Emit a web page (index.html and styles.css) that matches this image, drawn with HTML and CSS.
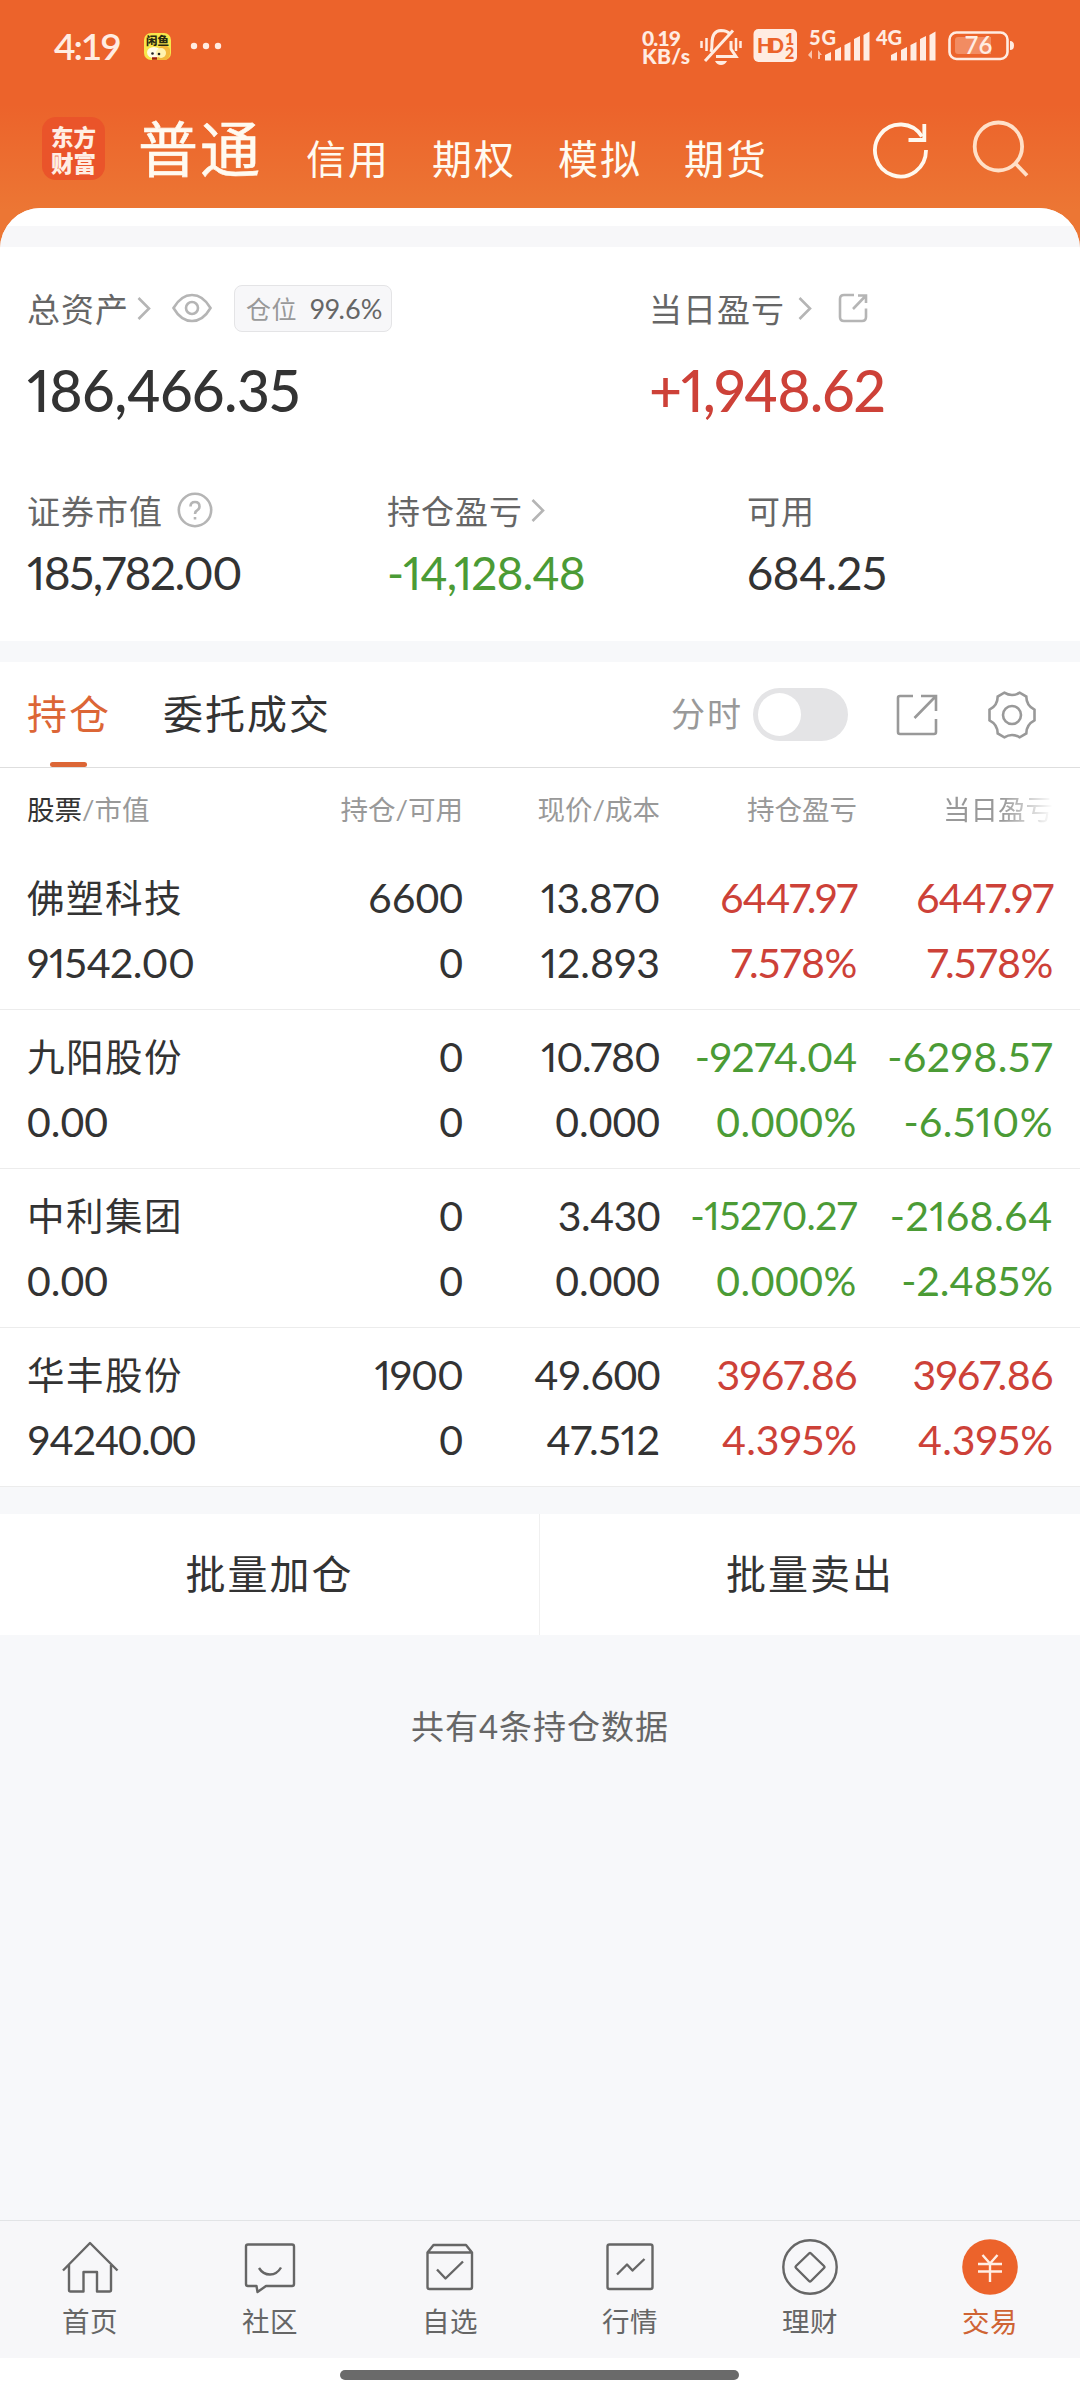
FILE: index.html
```html
<!DOCTYPE html>
<html lang="zh-CN">
<head>
<meta charset="utf-8">
<title>交易</title>
<link rel="stylesheet" href="styles.css">
</head>
<body>
<header class="top">
  <div class="status">
    <span class="clock">4:19</span>
    <svg class="app" width="27" height="27" viewBox="0 0 27 27"><rect width="27" height="27" rx="7" fill="#f8e64b"/><path d="M13 17Q20 8 26 16V21Q25 27 20 27H13Z" fill="#f3b93c"/><ellipse cx="10" cy="19.500" rx="7" ry="5.500" fill="#fffbe6"/><ellipse cx="17" cy="20" rx="5" ry="5" fill="#fff3b0"/><circle cx="8.500" cy="20.500" r="1.300" fill="#222"/><circle cx="15" cy="21" r="1.300" fill="#222"/><path d="M8 25.500h5" stroke="#a01c10" stroke-width="2.500"/><text x="13.500" y="11.500" text-anchor="middle" class="app-t">闲鱼</text></svg>
    <svg class="dots" width="32" height="8" viewBox="0 0 32 8" fill="#ffece2"><circle cx="4" cy="4" r="3.200"/><circle cx="16" cy="4" r="3.200"/><circle cx="28" cy="4" r="3.200"/></svg>
    <svg class="sys" width="380" height="44" viewBox="640 24 380 44" fill="#ffece2">
      <text x="642" y="46" class="net" textLength="39">0.19</text>
      <text x="642" y="63.500" class="net" textLength="48">KB/s</text>
      <g fill="none" stroke="#ffece2" stroke-width="3"><path d="M711 52Q712 49 712 43Q712 31 721 30.500Q727 30.500 730 34M716 56.500H736L731 49V41"/><path d="M705 61L733 30.500"/><path d="M701.500 41v7M706.500 38v13M736 38v13M740.500 41v7" stroke-width="2.500"/></g>
      <path d="M715 61H727Q725 65 721 65Q717 65 715 61Z"/>
      <rect x="753.500" y="29" width="43.500" height="33" rx="5"/>
      <g fill="#ec632b"><text x="757" y="52.500" class="hd" textLength="27">HD</text><text x="785" y="44.500" class="hn">1</text><text x="785" y="58.500" class="hn">2</text></g>
      <text x="809" y="44.500" class="gen" textLength="27">5G</text>
      <text x="876" y="44.500" class="gen" textLength="26">4G</text>
      <path d="M812 50v9l-4-4zM818 59v-9l4 5h-2v4z" opacity=".7"/>
      <path id="bars" d="M825 55l6-3v8.500h-6zM835 50l6-3v13.500h-6zM844.500 45l6-3v18.500h-6zM854 39l6-3v24.500h-6zM863.500 35l6-3.500v29h-6z"/>
      <use href="#bars" x="66"/>
      <rect x="949.500" y="32.500" width="58" height="26.500" rx="7" fill="none" stroke="#ffece2" stroke-width="2.600"/>
      <path d="M955 40q0-3 3-3H991V54H958q-3 0-3-3z" opacity=".3"/>
      <path d="M1010 41q4 0 4 4.500t-4 4.500z"/>
      <text x="978.500" y="54" text-anchor="middle" class="bat">76</text>
    </svg>
  </div>
  <nav class="head">
    <div class="logo"><span>东方</span><span>财富</span></div>
    <span class="main">普通</span>
    <span class="alt">信用</span><span class="alt">期权</span><span class="alt">模拟</span><span class="alt">期货</span>
    <svg class="refresh" width="60" height="60" viewBox="870 120 60 60" fill="none" stroke="#fff8ee" stroke-width="3.800"><path d="M926 150A25.500 26 0 1 1 922 136.500"/><path d="M924.300 124V140H908.500"/></svg>
    <svg class="search" width="60" height="60" viewBox="970 120 60 60" fill="none" stroke="#ffe0c8" stroke-width="3.800"><ellipse cx="998.400" cy="146.500" rx="23.700" ry="24"/><path d="M1015 163L1027 175.500"/></svg>
  </nav>
</header>
<main>
  <div class="lip"></div>
  <section class="assets">
    <div class="major">
      <div>
        <div class="lab"><span>总资产</span><svg class="chev" width="14" height="24" viewBox="0 0 14 24"><path d="M1.500 2L12 12.500L1.500 23"/></svg>
        <svg class="eye" width="40" height="30" viewBox="0 0 40 30"><path d="M1.500 15Q9 2 20 2T38.500 15Q31 28 20 28T1.500 15Z"/><circle cx="20" cy="15" r="6"/></svg>
        <span class="badge"><i>仓位</i><b class="n">99.6%</b></span></div>
        <div class="big"><span class="n k1">186,466.35</span></div>
      </div>
      <div>
        <div class="lab"><span>当日盈亏</span><svg class="chev c2" width="14" height="24" viewBox="0 0 14 24"><path d="M1.500 2L12 12.500L1.500 23"/></svg>
        <svg class="out" width="30" height="30" viewBox="0 0 30 30"><path d="M16 2H6Q2 2 2 6V24Q2 28 6 28H24Q28 28 28 24V15.500M15 16L27.500 3M20 2.500H28V10"/></svg></div>
        <div class="big red"><span class="n k2">+1,948.62</span></div>
      </div>
    </div>
    <div class="minor">
      <div><div class="lab"><span>证券市值</span><svg class="q" width="36" height="36" viewBox="0 0 36 36"><circle cx="18" cy="18" r="16.200"/><path d="M13.500 14.500Q13.500 10 18 10T22.500 14.500Q22.500 17 20 18.500Q18 19.500 18 22"/><path d="M18 25v2.500"/></svg></div><div class="mid"><span class="n k3">185,782.00</span></div></div>
      <div><div class="lab"><span>持仓盈亏</span><svg class="chev" width="14" height="24" viewBox="0 0 14 24"><path d="M1.500 2L12 12.500L1.500 23"/></svg></div><div class="mid green"><span class="n k2">-14,128.48</span></div></div>
      <div><div class="lab"><span>可用</span></div><div class="mid"><span class="n k1">684.25</span></div></div>
    </div>
  </section>
  <section class="tabs">
    <span class="tab on">持仓</span><span class="tab">委托成交</span>
    <span class="fs">分时</span><span class="toggle"></span>
    <svg class="share" width="44" height="44" viewBox="0 0 44 44"><path d="M18 3H5Q3 3 3 5V39Q3 41 5 41H39Q41 41 41 39V26M19.500 25L40 4M26 3H41V18"/></svg>
    <svg class="gear" width="52" height="52" viewBox="0 0 52 52"><path d="M18.300 3.700Q26 8.300 33.700 3.700L40.300 7.500Q40.300 16.500 48.500 20.700V31.300Q40.300 35.500 40.300 44.500L33.700 48.300Q26 43.700 18.300 48.300L11.700 44.500Q11.700 35.500 3.500 31.300V20.700Q11.700 16.500 11.700 7.500Z"/><circle cx="26" cy="26" r="9"/></svg>
  </section>
  <section class="table">
    <div class="th"><span><em>股票</em>/市值</span><span>持仓/可用</span><span>现价/成本</span><span>持仓盈亏</span><span class="fade">当日盈亏</span></div>
    <div class="row"><span class="name">佛塑科技</span><span class="n t">6600</span><span class="n k1">13.870</span><span class="n red k2">6447.97</span><span class="n red k2">6447.97</span>
      <span class="n k1">91542.00</span><span class="n t">0</span><span class="n">12.893</span><span class="n red k1">7.578%</span><span class="n red k1">7.578%</span></div>
    <div class="row"><span class="name">九阳股份</span><span class="n t">0</span><span class="n k2">10.780</span><span class="n green k1">-9274.04</span><span class="n green w1">-6298.57</span>
      <span class="n t">0.00</span><span class="n t">0</span><span class="n t">0.000</span><span class="n green t w1">0.000%</span><span class="n green w1">-6.510%</span></div>
    <div class="row"><span class="name">中利集团</span><span class="n t">0</span><span class="n t k1">3.430</span><span class="n green small k1">-15270.27</span><span class="n green w1">-2168.64</span>
      <span class="n t">0.00</span><span class="n t">0</span><span class="n t">0.000</span><span class="n green t w1">0.000%</span><span class="n green">-2.485%</span></div>
    <div class="row"><span class="name">华丰股份</span><span class="n k2">1900</span><span class="n t k1">49.600</span><span class="n red k1">3967.86</span><span class="n red k1">3967.86</span>
      <span class="n t k2">94240.00</span><span class="n t">0</span><span class="n">47.512</span><span class="n red">4.395%</span><span class="n red">4.395%</span></div>
  </section>
  <section class="batch"><span>批量加仓</span><span>批量卖出</span></section>
  <p class="note">共有4条持仓数据</p>
</main>
<footer>
  <nav class="bar">
    <a><svg width="60" height="60" viewBox="0 0 60 60"><path d="M3 34.500L30 7L57.500 34.500M9 29V54Q9 55.500 10.500 55.500H23.500V36H37V55.500H49.500Q51 55.500 51 54V29"/></svg>首页</a>
    <a><svg width="60" height="60" viewBox="0 0 60 60"><path d="M8 8.500H52Q54 8.500 54 10.500V48Q54 50 52 50H26L17.500 56L16.500 50H8Q6 50 6 48V10.500Q6 8.500 8 8.500ZM19 32Q23 38.500 30 38.500T41 31.500"/></svg>社区</a>
    <a><svg width="60" height="60" viewBox="0 0 60 60"><path d="M7.500 16.500L13.500 9H46L52 16.500V51Q52 53 50 53H9.500Q7.500 53 7.500 51ZM7.500 16.500H52M17 33.500L25.500 42.500L43 25.500"/></svg>自选</a>
    <a><svg width="60" height="60" viewBox="0 0 60 60"><rect x="7.500" y="8.500" width="45" height="44.500" rx="2"/><path d="M17 38.500L27 28.500L32.500 34.500L44.500 23"/></svg>行情</a>
    <a><svg width="60" height="60" viewBox="0 0 60 60"><ellipse cx="30" cy="31" rx="26.700" ry="26.700"/><path d="M29 17.500Q30 16.500 31 17.500L44 30Q45 31 44 32L31 45Q30 46 29 45L16 32Q15 31 16 30Z"/></svg>理财</a>
    <a class="cur"><svg width="60" height="60" viewBox="0 0 60 60"><circle cx="30" cy="31" r="27.800"/><path d="M22.500 19L30 27.500L37.500 19M18 28H42M18 35.500H42M30 27.500V46"/></svg>交易</a>
  </nav>
  <div class="home"></div>
</footer>
</body>
</html>
```
FILE: styles.css
```css
* { box-sizing: border-box; }
body { margin: 0; width: 1080px; height: 2400px; display: flex; flex-direction: column; background: linear-gradient(#ec632b 105px, #ec7634 210px, #ec7634 260px, #f7f8fa 260px); font-family: Lato, "Noto Sans CJK SC", sans-serif; color: #333; overflow: hidden; }
svg { display: block; flex: none; }
i, em, b { font-style: normal; font-weight: 400; }
.top { height: 208px; }
.status { height: 92px; display: flex; align-items: center; padding-left: 54px; }
.clock { width: 90px; font-size: 37px; font-weight: 600; letter-spacing: -2px; line-height: 40px; color: #ffece2; }
.app-t { font: 900 11.500px "Noto Sans CJK SC", sans-serif; fill: #2a2a10; }
.dots { margin-left: 19px; }
.sys { margin-left: 418px; }
.net { font: 900 21px Lato, sans-serif; }
.hd { font: 900 20px Lato, sans-serif; }
.hn { font: 900 16px Lato, sans-serif; }
.gen { font: 900 20px Lato, sans-serif; }
.bat { font: 600 24px Lato, sans-serif; }
.head { height: 116px; display: flex; align-items: flex-start; padding: 25px 0 0 42px; color: #fffaf0; }
.logo { width: 63px; height: 63px; border-radius: 14px; background: #ea542a; display: flex; flex-direction: column; align-items: center; justify-content: center; font: 900 22.500px/26px "Noto Sans CJK SC", sans-serif; color: #ffeee4; }
.main { margin: 0 44px 0 33px; font-size: 60px; letter-spacing: 2px; line-height: 65px; -webkit-text-stroke: .6px #fffaf0; }
.alt { width: 126px; font-size: 40px; letter-spacing: 2px; line-height: 84px; }
.refresh { margin-left: 60px; margin-top: 3px; }
.search { margin-left: 40px; margin-top: 3px; }
main { flex: 1; display: flex; flex-direction: column; border-radius: 41px 41px 0 0; overflow: hidden; background: #f7f8fa; }
.lip { height: 39px; background: linear-gradient(#fff 18px, #f7f7f9 18px); }
.assets { height: 394px; background: #fff; padding: 34px 27px 0; }
.major { display: grid; grid-template-columns: 622px 1fr; }
.minor { display: grid; grid-template-columns: 360px 360px 1fr; margin-top: 58px; }
.lab { height: 54px; display: flex; align-items: center; font-size: 33px; letter-spacing: 1px; color: #666; }
.lab svg { fill: none; stroke: #b5b5b5; stroke-width: 2.600; }
.chev { margin-left: 8px; }
.c2 { margin-left: 13px; }
.eye { margin-left: 21px; }
.badge { margin-left: 22px; width: 158px; height: 47px; border: 1px solid #e4e4e6; border-radius: 8px; background: #f7f7f9; display: flex; align-items: center; padding-left: 11px; font-size: 25px; letter-spacing: .5px; color: #999; }
.badge b { margin-left: 13px; font-size: 27px; color: #666; letter-spacing: .3px; }
.out { margin-left: 26px; }
.q { margin-left: 14px; }
.big { height: 70px; margin-top: 20px; line-height: 70px; font-size: 57px; font-weight: 500; }
.mid { height: 60px; margin-top: 6px; line-height: 60px; font-size: 46px; }
/* Numbers: proportional figures, with small tracking steps (k tighter, w wider, t tabular). */
.n { font-variant-numeric: proportional-nums; }
.t { font-variant-numeric: tabular-nums; }
.k1 { letter-spacing: -.5px; }
.k2 { letter-spacing: -1px; }
.k3 { letter-spacing: -1.500px; }
.w1 { letter-spacing: .5px; }
.red { color: #cd4138; }
.green { color: #4b9b35; }
.tabs { margin-top: 21px; height: 106px; background: #fff; border-bottom: 1px solid #dedede; display: flex; align-items: center; padding: 0 42px 0 27px; }
.tab { position: relative; font-size: 40px; letter-spacing: 2px; line-height: 103px; margin-right: 52px; }
.on { color: #dc6636; }
.on::after { content: ""; position: absolute; left: 23px; bottom: -1px; width: 37px; height: 5px; border-radius: 3px; background: #dc6636; }
.fs { margin-left: auto; font-size: 34px; letter-spacing: 2px; line-height: 50px; margin-bottom: 2px; color: #999; }
.toggle { margin-left: 10px; width: 95px; height: 53px; border-radius: 27px; background: #e4e4e6; padding: 5px; }
.toggle::before { content: ""; display: block; width: 43px; height: 43px; border-radius: 50%; background: #fff; }
.share { margin-left: 47px; }
.gear { margin-left: 47px; }
.share, .gear { fill: none; stroke: #999; stroke-width: 2.600; }
.table { background: #fff; }
.th, .row { display: grid; grid-template-columns: 220px 216px 197px 197px 196px; padding: 0 27px; text-align: right; white-space: nowrap; }
.th { height: 83px; line-height: 84px; font-size: 27.500px; letter-spacing: 0; color: #999; }
.th em { color: #333; }
.th span:first-child, .row span:nth-child(5n+1) { text-align: left; }
.fade { -webkit-mask: linear-gradient(90deg, #000 145px, transparent 196px); mask: linear-gradient(90deg, #000 145px, transparent 196px); }
.row { height: 159px; padding-top: 14px; grid-template-rows: 65px 65px; line-height: 65px; font-size: 41px; border-bottom: 1px solid #ececec; }
.row .name { font-size: 37.500px; letter-spacing: 1.500px; }
.row .small { font-size: 39px; }
.batch { margin-top: 27px; height: 121px; display: grid; grid-template-columns: 539px 1fr; background: #fff; text-align: center; line-height: 120px; font-size: 40px; letter-spacing: 2px; }
.batch span + span { border-left: 1px solid #f0f0f0; }
.note { margin: 66px 0 0; text-align: center; font-size: 33px; letter-spacing: 1px; line-height: 50px; color: #666; }
footer { height: 180px; background: #fff; }
.bar { height: 138px; border-top: 1px solid #e2e4e6; background: #f7f7f9; display: grid; grid-template-columns: repeat(6, 180px); }
.bar a { display: flex; flex-direction: column; align-items: center; padding-top: 15px; font-size: 27.500px; letter-spacing: .5px; line-height: 52px; color: #666; }
.bar svg { fill: none; stroke: #666; stroke-width: 2.400; stroke-linejoin: round; }
.bar .cur { color: #cf6434; }
.cur circle { fill: #ec632b; stroke: none; }
.bar .cur path { stroke: #ffeee4; }
.home { width: 399px; height: 10px; margin: 12px 0 0 340px; border-radius: 5px; background: #6a6a6a; }
```
